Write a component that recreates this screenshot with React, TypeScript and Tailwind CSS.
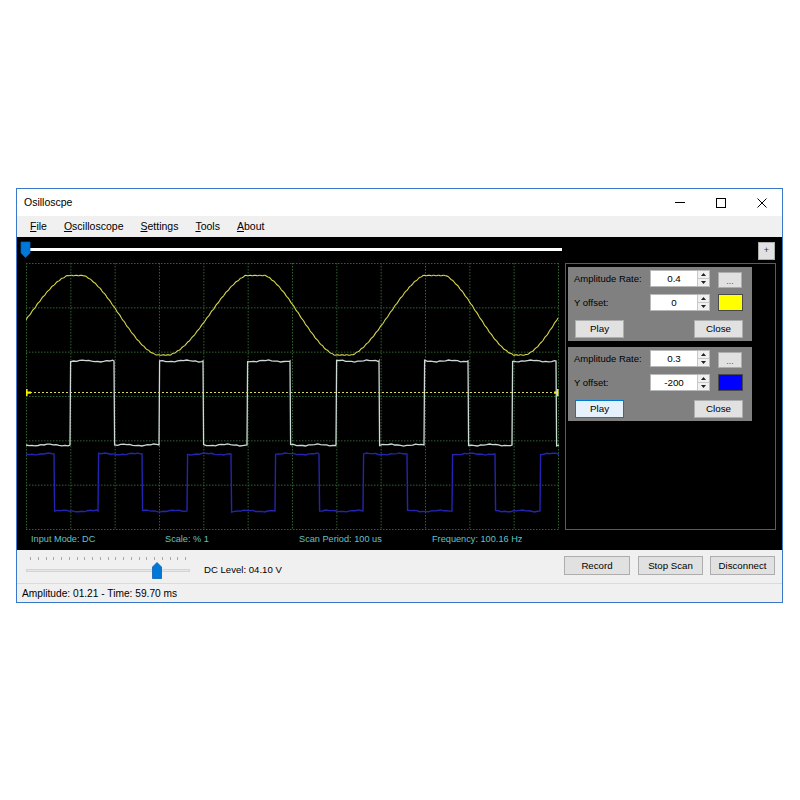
import React from 'react'

// scope drawing area, origin at the top-left of the grid
const W = 533
const H = 267
const OX = 26
const OY = 263

const wob = (x: number) => Math.sin(x * 2.3) * 0.7 + Math.sin(x * 0.77) * 0.4

function sinePath() {
    const ext = [
        [-17, 356], [76, 274], [163, 356], [256, 273], [343, 357], [435, 272], [520, 356], [600, 273]
    ]
    const pts: string[] = []
    for (let x = OX; x <= OX + W - 1; x += 1) {
        let i = 0
        while (i < ext.length - 2 && x >= ext[i + 1][0]) i++
        const [x0, y0] = ext[i]
        const [x1, y1] = ext[i + 1]
        const t = (x - x0) / (x1 - x0)
        let y = y0 + (y1 - y0) * (1 - Math.cos(Math.PI * t)) / 2
        y = Math.min(Math.max(y, 275.5), 355) + Math.sin(x * 1.3) * 0.35
        pts.push(`${(x - OX).toFixed(1)},${(y - OY).toFixed(1)}`)
    }
    return 'M' + pts.join(' L')
}

function squarePath(startHigh: boolean, edges: number[], hi: number, lo: number) {
    let high = startHigh
    let x = 0
    const pts: string[] = []
    const flat = (xa: number, xb: number, y: number) => {
        for (let p = xa; p < xb; p += 3) pts.push(`${p.toFixed(1)},${(y + wob(p)).toFixed(1)}`)
        pts.push(`${xb.toFixed(1)},${y.toFixed(1)}`)
    }
    for (const e of edges) {
        const ex = e - OX
        flat(x, ex, high ? hi : lo)
        high = !high
        pts.push(`${(ex + 0.6).toFixed(1)},${(high ? hi : lo).toFixed(1)}`)
        x = ex + 0.6
    }
    flat(x, W, high ? hi : lo)
    return 'M' + pts.join(' L')
}

function Scope() {
    const cols = Array.from({ length: 13 }, (_, i) => 0.5 + (i * (W - 1)) / 12)
    const rows = Array.from({ length: 7 }, (_, j) => 0.5 + (j * (H - 1)) / 6)
    return (
        <svg width={W} height={H} viewBox={`0 0 ${W} ${H}`} className="block shrink-0">
            {cols.map((x) => (
                <line key={'c' + x} x1={x} y1={0} x2={x} y2={H} stroke="#2d622d" strokeWidth={1} strokeDasharray="1.5 1.5" />
            ))}
            {rows.map((y) => (
                <line key={'r' + y} x1={0} y1={y} x2={W} y2={y} stroke="#2d622d" strokeWidth={1} strokeDasharray="1.5 1.5" />
            ))}
            {/* trigger level */}
            <line x1={4} y1={129.5} x2={W - 3} y2={129.5} stroke="#d8d860" strokeWidth={1} strokeDasharray="2 2" />
            <rect x={0} y={126} width={1.6} height={7} fill="#f2f200" />
            <rect x={0} y={128.5} width={5} height={2.2} fill="#f2f200" />
            <rect x={W - 2} y={126} width={1.6} height={7} fill="#f2f200" />
            <rect x={W - 5} y={128.5} width={4} height={2.2} fill="#f2f200" />

            <path d={sinePath()} fill="none" stroke="#d6d64a" strokeWidth={1.1} />
            <path
                d={squarePath(false, [70, 114, 159, 203, 247, 290, 336, 379, 424, 468, 512, 556], 98, 182)}
                fill="none"
                stroke="#cdd9d6"
                strokeWidth={1.3}
            />
            <path
                d={squarePath(true, [54, 98, 142, 187, 231, 275, 319, 363, 407, 452, 495, 540], 191, 248)}
                fill="none"
                stroke="#2424b0"
                strokeWidth={1.4}
            />
        </svg>
    )
}

function Spin({ value }: { value: string }) {
    return (
        <div className="w-[60px] h-[17px] bg-white border border-[#b9b9b9] flex">
            <div className="flex-1 text-center text-[9.8px] leading-[15px] text-black">{value}</div>
            <div className="w-[12px] border-l border-[#c8c8c8] bg-[#f0f0f0] flex flex-col">
                <div className="flex-1 flex items-center justify-center border-b border-[#c8c8c8]">
                    <svg width="5" height="3" viewBox="0 0 5 3"><path d="M0 3 L2.5 0 L5 3 Z" fill="#222" /></svg>
                </div>
                <div className="flex-1 flex items-center justify-center">
                    <svg width="5" height="3" viewBox="0 0 5 3"><path d="M0 0 L2.5 3 L5 0 Z" fill="#222" /></svg>
                </div>
            </div>
        </div>
    )
}

function Panel({ amp, off, color, active }: { amp: string; off: string; color: string; active?: boolean }) {
    return (
        <div className="w-[184px] h-[74px] bg-[#808080] flex flex-col shrink-0">
            <div className="flex items-start mt-[3px] h-[18px]">
                <span className="w-[82px] pl-[6px] text-[9.5px] leading-[17px] text-black">Amplitude Rate:</span>
                <Spin value={amp} />
                <div className="ml-[8px] mt-[2px] w-[24px] h-[16px] bg-[#e1e1e1] border border-[#adadad] text-[9px] leading-[16px] text-center text-[#555]">
                    ...
                </div>
            </div>
            <div className="flex items-start mt-[6px] h-[17px]">
                <span className="w-[82px] pl-[6px] text-[9.5px] leading-[17px] text-black">Y offset:</span>
                <Spin value={off} />
                <div className="ml-[8px] w-[25px] h-[17px] border border-[#4a4a4a]" style={{ background: color }} />
            </div>
            <div className="flex justify-between pl-[7px] pr-[9px] mt-[9px]">
                <div
                    className={
                        active
                            ? 'w-[49px] h-[18px] bg-[#e5f1fb] border border-[#0078d7] text-[9.8px] leading-[16px] text-center text-black'
                            : 'w-[49px] h-[18px] bg-[#e1e1e1] border border-[#adadad] text-[9.8px] leading-[16px] text-center text-black'
                    }
                >
                    Play
                </div>
                <div className="w-[49px] h-[18px] bg-[#e1e1e1] border border-[#adadad] text-[9.8px] leading-[16px] text-center text-black">
                    Close
                </div>
            </div>
        </div>
    )
}

function Btn({ label, w }: { label: string; w: string }) {
    return (
        <div className={`${w} h-[19px] bg-[#e1e1e1] border border-[#adadad] text-[9.7px] leading-[17px] text-center text-black`}>
            {label}
        </div>
    )
}

export default function App() {
    return (
        <div className="w-[800px] h-[800px] bg-white pt-[188px] pl-[16px] font-['Liberation_Sans',Arial,sans-serif]">
            <div className="w-[767px] h-[415px] border border-[#3a78c9] flex flex-col bg-[#f0f0f0]">
                {/* title bar */}
                <div className="h-[27px] bg-white flex items-center shrink-0">
                    <span className="pl-[7px] text-[10.5px] text-black">Osilloscpe</span>
                    <div className="ml-auto flex h-full">
                        <div className="w-[41px] flex items-center justify-center">
                            <div className="w-[10px] h-px bg-black" />
                        </div>
                        <div className="w-[41px] flex items-center justify-center">
                            <div className="w-[10px] h-[10px] border border-black" />
                        </div>
                        <div className="w-[41px] flex items-center justify-center">
                            <svg width="10" height="10" viewBox="0 0 10 10">
                                <path d="M0.5 0.5 L9.5 9.5 M9.5 0.5 L0.5 9.5" stroke="#000" strokeWidth="1" />
                            </svg>
                        </div>
                    </div>
                </div>

                {/* menu */}
                <div className="h-[21px] flex items-center pl-[13px] gap-[17px] text-[10.5px] text-black shrink-0">
                    <span><span className="underline">F</span>ile</span>
                    <span><span className="underline">O</span>scilloscope</span>
                    <span><span className="underline">S</span>ettings</span>
                    <span><span className="underline">T</span>ools</span>
                    <span><span className="underline">A</span>bout</span>
                </div>

                {/* scope area */}
                <div className="h-[313px] bg-black flex flex-col shrink-0">
                    <div className="h-[26px] flex items-start">
                        <div className="ml-[3px] mt-[4px] relative w-[542px] h-[18px]">
                            <div className="absolute left-[6px] right-0 top-[7px] h-[3px] bg-white" />
                            <svg width="11" height="17" viewBox="0 0 11 17" className="absolute left-0 top-0">
                                <path d="M1 1 H10 V12 L5.5 16.5 L1 12 Z" fill="#0078d7" stroke="#0a5fb0" strokeWidth="0.8" />
                            </svg>
                        </div>
                        <div className="ml-auto mr-[7px] mt-[5px] w-[17px] h-[18px] bg-[#e1e1e1] border border-[#adadad] flex items-center justify-center text-[9px] text-[#333]">
                            +
                        </div>
                    </div>

                    <div className="flex h-[267px]">
                        <div className="ml-[9px]">
                            <Scope />
                        </div>
                        <div className="ml-[6px] w-[211px] h-[267px] border border-[#5c5c5c] pl-[2px] pt-[3px] flex flex-col gap-[6px]">
                            <Panel amp="0.4" off="0" color="#ffff00" />
                            <Panel amp="0.3" off="-200" color="#0000ff" active />
                        </div>
                    </div>

                    <div className="h-[20px] flex items-center pl-[14px] text-[9.2px] text-[#62c2c6]">
                        <span className="w-[134px]">Input Mode: DC</span>
                        <span className="w-[134px]">Scale: % 1</span>
                        <span className="w-[133px]">Scan Period: 100 us</span>
                        <span className="w-[134px]">Frequency: 100.16 Hz</span>
                    </div>
                </div>

                {/* controls */}
                <div className="h-[33px] flex items-start shrink-0">
                    <div className="ml-[9px] w-[164px] h-[33px] relative">
                        <div className="absolute top-[7px] left-[4px] right-[4px] flex justify-between">
                            {Array.from({ length: 21 }, (_, i) => (
                                <div key={i} className="w-px h-[3px] bg-[#a8a8a8]" />
                            ))}
                        </div>
                        <div className="absolute top-[19px] left-0 right-0 h-[3px] bg-[#e7e7e7] border border-[#d4d4d4]" />
                        <svg width="10" height="17" viewBox="0 0 10 17" className="absolute left-[126px] top-[12px]">
                            <path d="M0.5 16.5 V5 L5 0.5 L9.5 5 V16.5 Z" fill="#0078d7" stroke="#0a5fb0" strokeWidth="0.8" />
                        </svg>
                    </div>
                    <span className="ml-[14px] mt-[14px] text-[9.6px] leading-[11px] text-black">DC Level: 04.10 V</span>
                    <div className="ml-auto mr-[7px] mt-[6px] flex">
                        <Btn label="Record" w="w-[66px]" />
                        <div className="w-[8px]" />
                        <Btn label="Stop Scan" w="w-[65px]" />
                        <div className="w-[7px]" />
                        <Btn label="Disconnect" w="w-[65px]" />
                    </div>
                </div>

                {/* status bar */}
                <div className="flex-1 border-t border-[#dadada] flex items-center pl-[5px] pt-px text-[10.2px] text-black">
                    Amplitude: 01.21 - Time: 59.70 ms
                </div>
            </div>
        </div>
    )
}
